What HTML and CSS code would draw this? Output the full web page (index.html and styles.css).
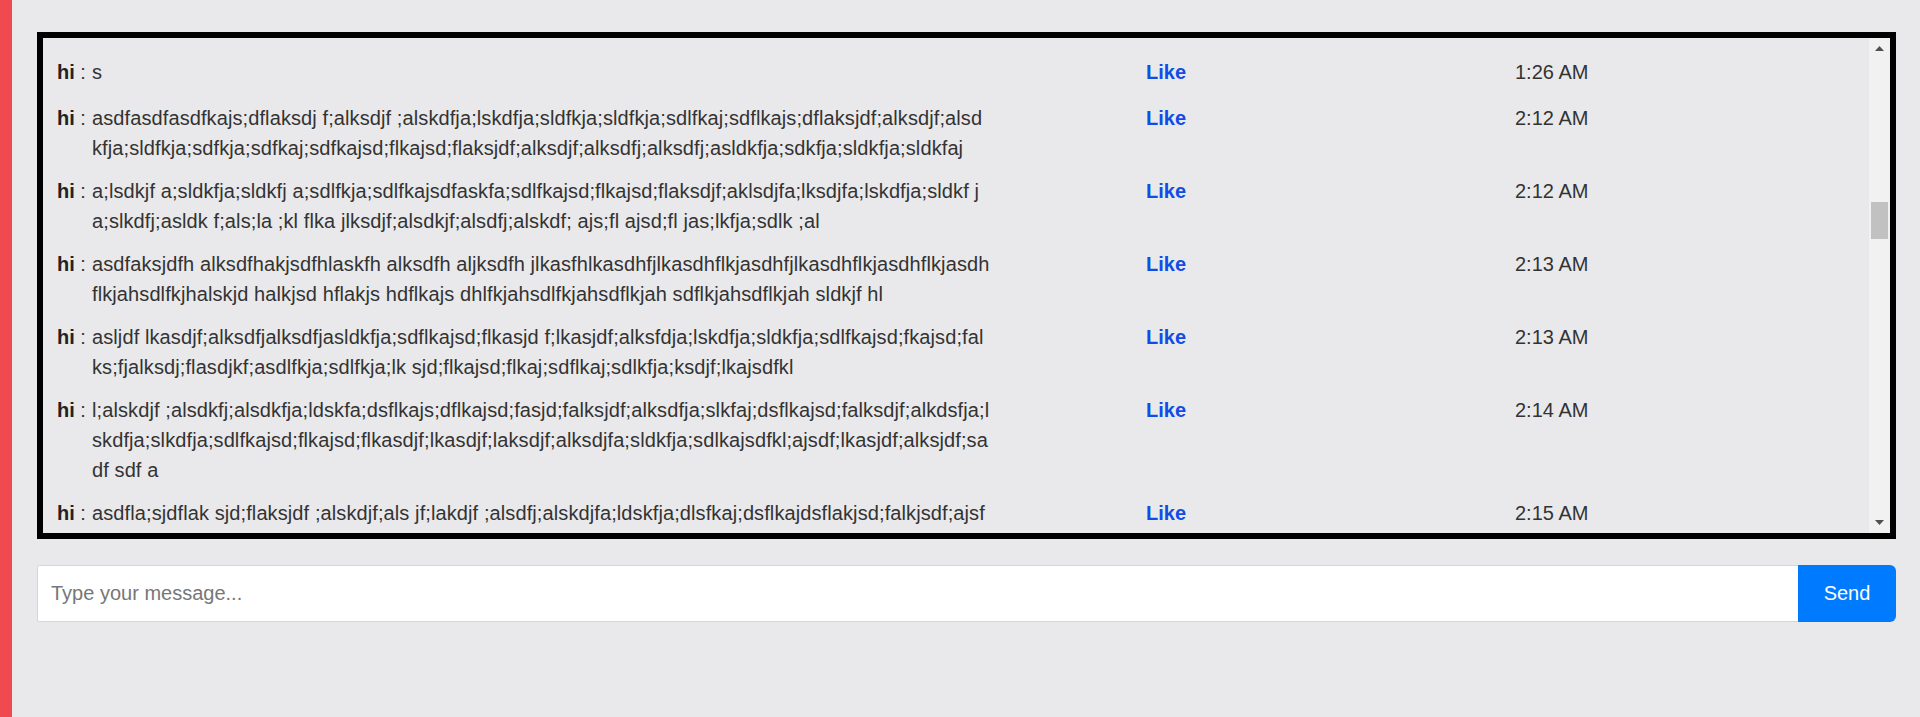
FILE: index.html
```html
<!DOCTYPE html>
<html lang="en">
<head>
<meta charset="utf-8">
<title>Chat</title>
<link rel="stylesheet" href="styles.css">
</head>
<body>
<div class="side-bar"></div>
<main class="chat">
  <section class="chat-box">
    <div class="messages">
      <div class="msg">
        <span class="who"><b>hi</b> : </span>
        <span class="text">s</span>
        <span class="like">Like</span>
        <span class="time">1:26 AM</span>
      </div>
      <div class="msg">
        <span class="who"><b>hi</b> : </span>
        <span class="text">asdfasdfasdfkajs;dflaksdj f;alksdjf ;alskdfja;lskdfja;sldfkja;sldfkja;sdlfkaj;sdflkajs;dflaksjdf;alksdjf;alsdkfja;sldfkja;sdfkja;sdfkaj;sdfkajsd;flkajsd;flaksjdf;alksdjf;alksdfj;alksdfj;asldkfja;sdkfja;sldkfja;sldkfaj</span>
        <span class="like">Like</span>
        <span class="time">2:12 AM</span>
      </div>
      <div class="msg">
        <span class="who"><b>hi</b> : </span>
        <span class="text">a;lsdkjf a;sldkfja;sldkfj a;sdlfkja;sdlfkajsdfaskfa;sdlfkajsd;flkajsd;flaksdjf;aklsdjfa;lksdjfa;lskdfja;sldkf ja;slkdfj;asldk f;als;la ;kl flka jlksdjf;alsdkjf;alsdfj;alskdf; ajs;fl ajsd;fl jas;lkfja;sdlk ;al</span>
        <span class="like">Like</span>
        <span class="time">2:12 AM</span>
      </div>
      <div class="msg">
        <span class="who"><b>hi</b> : </span>
        <span class="text">asdfaksjdfh alksdfhakjsdfhlaskfh alksdfh aljksdfh jlkasfhlkasdhfjlkasdhflkjasdhfjlkasdhflkjasdhflkjasdhflkjahsdlfkjhalskjd halkjsd hflakjs hdflkajs dhlfkjahsdlfkjahsdflkjah sdflkjahsdflkjah sldkjf hl</span>
        <span class="like">Like</span>
        <span class="time">2:13 AM</span>
      </div>
      <div class="msg">
        <span class="who"><b>hi</b> : </span>
        <span class="text">asljdf lkasdjf;alksdfjalksdfjasldkfja;sdflkajsd;flkasjd f;lkasjdf;alksfdja;lskdfja;sldkfja;sdlfkajsd;fkajsd;falks;fjalksdj;flasdjkf;asdlfkja;sdlfkja;lk sjd;flkajsd;flkaj;sdflkaj;sdlkfja;ksdjf;lkajsdfkl</span>
        <span class="like">Like</span>
        <span class="time">2:13 AM</span>
      </div>
      <div class="msg">
        <span class="who"><b>hi</b> : </span>
        <span class="text">l;alskdjf ;alsdkfj;alsdkfja;ldskfa;dsflkajs;dflkajsd;fasjd;falksjdf;alksdfja;slkfaj;dsflkajsd;falksdjf;alkdsfja;lskdfja;slkdfja;sdlfkajsd;flkajsd;flkasdjf;lkasdjf;laksdjf;alksdjfa;sldkfja;sdlkajsdfkl;ajsdf;lkasjdf;alksjdf;sadf sdf a</span>
        <span class="like">Like</span>
        <span class="time">2:14 AM</span>
      </div>
      <div class="msg">
        <span class="who"><b>hi</b> : </span>
        <span class="text">asdfla;sjdflak sjd;flaksjdf ;alskdjf;als jf;lakdjf ;alsdfj;alskdjfa;ldskfja;dlsfkaj;dsflkajdsflakjsd;falkjsdf;ajsfdlkfj;alsdkfj;alskdjf</span>
        <span class="like">Like</span>
        <span class="time">2:15 AM</span>
      </div>
    </div>
    <div class="scrollbar">
      <div class="sb-btn">
        <svg width="9" height="5" viewBox="0 0 9 5"><polygon points="0,5 4.5,0 9,5" fill="#505050"/></svg>
      </div>
      <div class="sb-track"><div class="sb-thumb"></div></div>
      <div class="sb-btn">
        <svg width="9" height="5" viewBox="0 0 9 5"><polygon points="0,0 9,0 4.5,5" fill="#505050"/></svg>
      </div>
    </div>
  </section>
  <form class="composer">
    <input class="composer-input" type="text" placeholder="Type your message...">
    <button class="composer-send" type="button">Send</button>
  </form>
</main>
</body>
</html>
```

FILE: styles.css
```css
* { box-sizing: border-box; }

html, body {
  margin: 0;
  height: 100%;
}

body {
  display: flex;
  background: #e9e9eb;
  font-family: "Liberation Sans", Arial, sans-serif;
  font-size: 20px;
  color: #333;
  overflow: hidden;
}

.side-bar {
  width: 12px;
  flex: none;
  background: #f04a50;
}

.chat {
  flex: 1;
  padding: 32px 24px 0 25px;
}

.chat-box {
  display: flex;
  height: 507px;
  border: 6px solid #000;
}

.messages {
  flex: 1;
  overflow: hidden;
  padding: 16.5px 0 0 14px;
}

.msg {
  display: flex;
  align-items: baseline;
  line-height: 30px;
  margin-bottom: 10.5px;
}

.who {
  flex: none;
  width: 35px;
  white-space: pre;
}

.who b {
  color: #222;
}

.text {
  flex: none;
  width: 898px;
  letter-spacing: 0.1px;
  word-break: break-all;
}

.like {
  flex: none;
  margin-left: 156px;
  width: 369px;
  padding: 2.5px 0;
  font-weight: bold;
  color: #104ce6;
}

.time {
  flex: none;
}

.scrollbar {
  flex: none;
  width: 21px;
  display: flex;
  flex-direction: column;
  background: #f1f1f1;
}

.sb-btn {
  height: 21px;
  display: flex;
  align-items: center;
  justify-content: center;
}

.sb-btn svg { display: block; }

.sb-track {
  flex: 1;
  padding: 0 2px;
}

.sb-thumb {
  margin-top: 143px;
  height: 37px;
  background: #c1c1c1;
}

.composer {
  display: flex;
  margin: 26px 0 0;
  height: 57px;
}

.composer-input {
  flex: 1;
  height: 57px;
  border: 1px solid #d6d6d6;
  border-right: none;
  border-radius: 2px 0 0 2px;
  background: #fff;
  padding: 0 13px;
  font-family: "Liberation Sans", Arial, sans-serif;
  font-size: 20px;
  color: #333;
  outline: none;
}

.composer-input::placeholder {
  color: #777;
}

.composer-send {
  flex: none;
  width: 98px;
  height: 57px;
  border: none;
  border-radius: 0 6px 6px 0;
  background: #007bff;
  color: #fff;
  font-family: "Liberation Sans", Arial, sans-serif;
  font-size: 20px;
  cursor: pointer;
}
```
